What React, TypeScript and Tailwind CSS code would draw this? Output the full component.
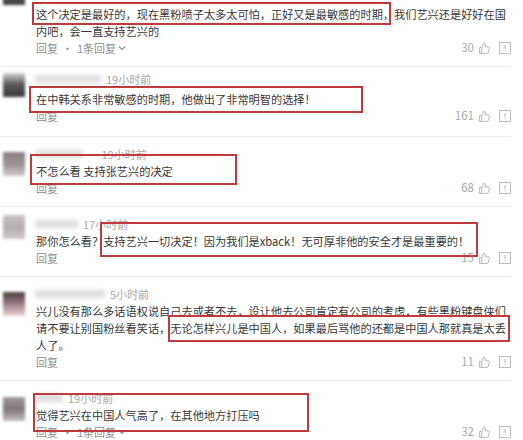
import React from 'react'

type Item = {
  wrap: string
  pad: string
  textGap: string
  time?: string
  nameW: string
  avatar: string
  avatarTop: string
  lines: string[]
  more?: boolean
  count: string
  box: string
}

const items: Item[] = [
  {
    wrap: '-mt-[20px]',
    pad: 'pt-[10px] pb-[10px]',
    textGap: 'mt-[2px]',
    nameW: 'w-0',
    avatar: 'from-[#6a6a6a] to-[#3f3f3f]',
    avatarTop: 'mt-[1px]',
    lines: [
      '这个决定是最好的，现在黑粉喷子太多太可怕，正好又是最敏感的时期，我们艺兴还是好好在国',
      '内吧，会一直支持艺兴的',
    ],
    more: true,
    count: '30',
    box: 'left-[32px] top-[22px] w-[359px] h-[23px]',
  },
  {
    wrap: '',
    pad: 'pt-[5px] pb-[12px]',
    textGap: 'mt-[5px]',
    time: '19小时前',
    nameW: 'w-[66px]',
    avatar: 'from-[#d4d4d4] via-[#555] to-[#3a3a3a]',
    avatarTop: 'mt-[6px]',
    lines: ['在中韩关系非常敏感的时期，他做出了非常明智的选择！'],
    count: '161',
    box: 'left-[29px] top-[19px] w-[334px] h-[27px]',
  },
  {
    wrap: '',
    pad: 'pt-[10px] pb-[10px]',
    textGap: 'mt-[2px]',
    time: '· 19小时前',
    nameW: 'w-[48px]',
    avatar: 'from-[#8a7f81] via-[#9c9294] to-[#d2cccd]',
    avatarTop: 'mt-[15px]',
    lines: ['不怎么看 支持张艺兴的决定'],
    count: '68',
    box: 'left-[30px] top-[17px] w-[207px] h-[31px]',
  },
  {
    wrap: '',
    pad: 'pt-[10px] pb-[10px]',
    textGap: 'mt-[2px]',
    time: '17小时前',
    nameW: 'w-[43px]',
    avatar: 'from-[#c9c5c5] via-[#b3aeae] to-[#cfcaca]',
    avatarTop: 'mt-[8px]',
    lines: ['那你怎么看？支持艺兴一切决定！因为我们是xback！无可厚非他的安全才是最重要的！'],
    count: '15',
    box: 'left-[100px] top-[15px] w-[378px] h-[35px]',
  },
  {
    wrap: '',
    pad: 'pt-[10px] pb-[10px]',
    textGap: 'mt-[2px]',
    time: '5小时前',
    nameW: 'w-[70px]',
    avatar: 'from-[#4a3d3e] via-[#9a7f84] to-[#ecd3d7]',
    avatarTop: 'mt-[15px]',
    lines: [
      '兴儿没有那么多话语权说自己去或者不去，设让他去公司肯定有公司的考虑，有些黑粉键盘侠们',
      '请不要让别国粉丝看笑话，无论怎样兴儿是中国人，如果最后骂他的还都是中国人那就真是太丢',
      '人了。',
    ],
    count: '11',
    box: 'left-[168px] top-[38px] w-[342px] h-[27px]',
  },
  {
    wrap: '',
    pad: 'pt-[10px] pb-[10px]',
    textGap: 'mt-[2px]',
    time: '19小时前',
    nameW: 'w-[28px]',
    avatar: 'from-[#a09a9a] via-[#7d7777] to-[#c4bfbf]',
    avatarTop: 'mt-[16px]',
    lines: ['觉得艺兴在中国人气高了，在其他地方打压吗'],
    more: true,
    count: '32',
    box: 'left-[33px] top-[12px] w-[276px] h-[39px]',
  },
]

function ThumbIcon() {
  return (
    <svg width="13" height="13" viewBox="0 0 24 24" fill="none" stroke="#b5b5b5" strokeWidth="1.8" strokeLinejoin="round">
      <path d="M7 10v11H3V10h4z" />
      <path d="M7 10l4-8c1.7 0 2.8 1.2 2.6 2.9L13 9h6.2c1.3 0 2.2 1.2 1.9 2.4l-2 8c-.2.9-1 1.6-1.9 1.6H7" />
    </svg>
  )
}

function ReportIcon() {
  return (
    <svg width="12" height="12" viewBox="0 0 12 12" fill="none">
      <rect x="0.5" y="0.5" width="11" height="11" stroke="#bdbdbd" />
      <path d="M6 3v4M6 8.3v1" stroke="#bdbdbd" strokeWidth="1.2" />
    </svg>
  )
}

function CommentRow({ item }: { item: Item }) {
  return (
    <div className={`relative flex border-b border-[#ededed] mr-[12px] ${item.wrap}`}>
      <div className="w-[36px] shrink-0 pl-[3px]">
        <div className={`w-[22px] h-[24px] bg-linear-to-b blur-[1.5px] ${item.avatar} ${item.avatarTop}`} />
      </div>
      <div className={`flex-1 ${item.pad}`}>
        <div className="flex items-center h-[14px] gap-[5px]">
          {item.time && (
            <>
              <div className={`h-[8px] bg-[#dedede] blur-[2px] -ml-[1px] ${item.nameW}`} />
              <span className="text-[11px] text-[#a8a8a8]">{item.time}</span>
            </>
          )}
        </div>
        <div className={`text-[11.2px] leading-[17px] text-[#383838] ${item.textGap}`}>
          {item.lines.map((l, i) => (
            <div key={i} className="whitespace-nowrap">
              {l}
            </div>
          ))}
        </div>
        <div className="flex items-center justify-between h-[16px] text-[11px] text-[#8e8e8e]">
          <div className="flex items-center">
            <span>回复</span>
            {item.more && (
              <>
                <span className="mx-[4px]">·</span>
                <span>1条回复</span>
                <svg width="8" height="8" viewBox="0 0 8 8" className="ml-[2px]">
                  <path d="M1 2.5l3 3 3-3" stroke="#8e8e8e" strokeWidth="1.1" fill="none" />
                </svg>
              </>
            )}
          </div>
          <div className="flex items-center text-[#a8a8a8]">
            <span className="text-[11.5px]">{item.count}</span>
            <span className="ml-[4px]">
              <ThumbIcon />
            </span>
            <span className="ml-[8px]">
              <ReportIcon />
            </span>
          </div>
        </div>
      </div>
      <div className={`absolute border-2 border-[#c13a3d] ${item.box}`} />
    </div>
  )
}

export default function App() {
  return (
    <div
      className="w-[523px] h-[440px] overflow-hidden bg-white"
      style={{ fontFamily: '"Noto Sans CJK SC", "Noto Sans", sans-serif' }}
    >
      {items.map((it, i) => (
        <CommentRow key={i} item={it} />
      ))}
    </div>
  )
}
